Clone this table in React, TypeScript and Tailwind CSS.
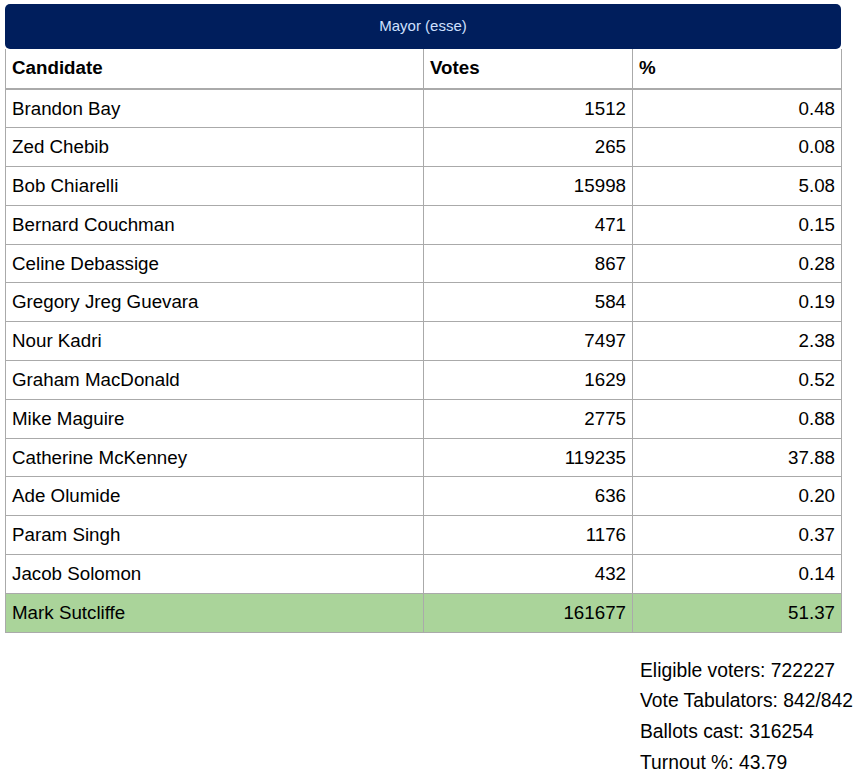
import React from "react"

type Row = { name: string; votes: number; pct: string; winner?: boolean }

const rows: Row[] = [
  { name: "Brandon Bay", votes: 1512, pct: "0.48" },
  { name: "Zed Chebib", votes: 265, pct: "0.08" },
  { name: "Bob Chiarelli", votes: 15998, pct: "5.08" },
  { name: "Bernard Couchman", votes: 471, pct: "0.15" },
  { name: "Celine Debassige", votes: 867, pct: "0.28" },
  { name: "Gregory Jreg Guevara", votes: 584, pct: "0.19" },
  { name: "Nour Kadri", votes: 7497, pct: "2.38" },
  { name: "Graham MacDonald", votes: 1629, pct: "0.52" },
  { name: "Mike Maguire", votes: 2775, pct: "0.88" },
  { name: "Catherine McKenney", votes: 119235, pct: "37.88" },
  { name: "Ade Olumide", votes: 636, pct: "0.20" },
  { name: "Param Singh", votes: 1176, pct: "0.37" },
  { name: "Jacob Solomon", votes: 432, pct: "0.14" },
  { name: "Mark Sutcliffe", votes: 161677, pct: "51.37", winner: true },
]

export default function App() {
  return (
    <div className="min-h-[773px] bg-white text-black font-['Liberation_Sans',Arial,sans-serif]">
      <div className="pt-[4px] px-[5px] w-[846px]">
        {/* title bar */}
        <div className="h-[45px] rounded-[5px] bg-[#001e5c] flex items-center justify-center text-[15px] text-[#cfe0ff]">
          Mayor (esse)
        </div>
        <table className="w-[836px] border-collapse table-fixed text-[18.75px]">
          <colgroup>
            <col className="w-[418px]" />
            <col className="w-[209px]" />
            <col className="w-[209px]" />
          </colgroup>
          <thead>
            <tr className="h-[40px]">
              <th className="border border-t-0 border-[#aaaaaa] border-b-2 text-left font-bold px-[6px]">Candidate</th>
              <th className="border border-t-0 border-[#aaaaaa] border-b-2 text-left font-bold px-[6px]">Votes</th>
              <th className="border border-t-0 border-[#aaaaaa] border-b-2 text-left font-bold px-[6px]">%</th>
            </tr>
          </thead>
          <tbody>
            {rows.map((r) => (
              <tr key={r.name} className={`h-[38.8px] ${r.winner ? "bg-[#aad49a]" : ""}`}>
                <td className="border border-[#aaaaaa] px-[6px]">{r.name}</td>
                <td className="border border-[#aaaaaa] px-[6px] text-right">{r.votes}</td>
                <td className="border border-[#aaaaaa] px-[6px] text-right">{r.pct}</td>
              </tr>
            ))}
          </tbody>
        </table>
      </div>
      <div className="mt-[23px] pl-[640px] whitespace-nowrap text-[19.3px] leading-[30.7px]">
        <div>Eligible voters: 722227</div>
        <div>Vote Tabulators: 842/842</div>
        <div>Ballots cast: 316254</div>
        <div>Turnout %: 43.79</div>
      </div>
    </div>
  )
}
